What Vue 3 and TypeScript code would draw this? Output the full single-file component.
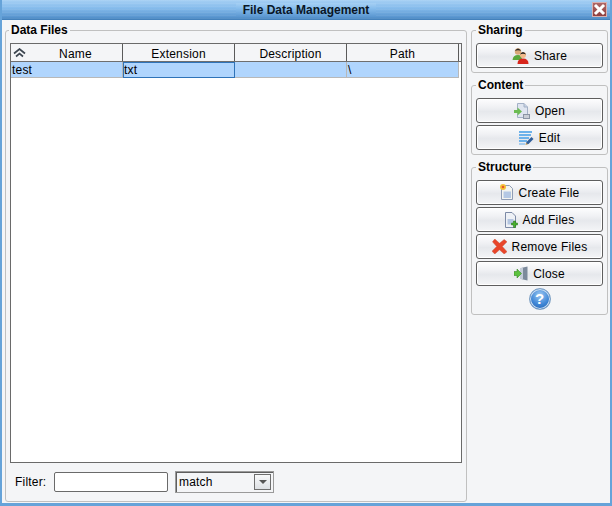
<script setup lang="ts">
const columns: string[] = ['Name', 'Extension', 'Description', 'Path']
</script>

<template>
  <div class="window">
    <header class="titlebar">
      <span class="title-text">File Data Management</span>
      <span class="close-x">
        <svg width="15" height="15" viewBox="0 0 15 15">
          <path d="M4 4 L11 11 M11 4 L4 11" stroke="#fff" stroke-width="3" stroke-linecap="square" />
        </svg>
      </span>
    </header>
    <main class="content">
      <fieldset class="group files">
        <legend>Data Files</legend>
        <div class="table">
          <div class="thead">
            <div v-for="(c, i) in columns" :key="c" class="th" :class="{ first: i === 0 }">
              <svg v-if="i === 0" class="sort" width="13" height="10" viewBox="0 0 13 10">
                <path d="M1 5.5 L6.5 1 L12 5.5 M3 8.5 L6.5 5.5 L10 8.5" fill="none" stroke="#3d4650" stroke-width="1.7" />
              </svg>
              {{ c }}
            </div>
            <div class="th-end"></div>
          </div>
          <div class="row">
            <div class="td">test</div>
            <div class="td focus">txt</div>
            <div class="td"></div>
            <div class="td">\</div>
          </div>
        </div>
        <div class="filter">
          <label class="filter-label">Filter:</label>
          <input class="filter-input" type="text" />
          <div class="combo">
            <span class="combo-text">match</span>
            <span class="combo-btn"><i class="arrow"></i></span>
          </div>
        </div>
      </fieldset>
      <aside class="side">
        <fieldset class="group">
          <legend>Sharing</legend>
          <button class="btn">
            <svg width="17" height="17" viewBox="0 0 17 17">
              <circle cx="6" cy="4.5" r="3.2" fill="#d9a878" />
              <path d="M2.8 4 Q6 -1 9.2 4 Q6 2.5 2.8 4 Z" fill="#2d2a26" />
              <path d="M0.5 13 Q1 8 6 8 Q10 8 10 13 Z" fill="#5aa83c" />
              <circle cx="11" cy="8" r="3" fill="#f2b98a" />
              <path d="M7.8 7.5 Q11 2.5 14.2 7.5 Q11 5.8 7.8 7.5 Z" fill="#222" />
              <path d="M5.5 17 Q5.5 11.5 11 11.5 Q16.5 11.5 16.5 17 Z" fill="#d8261c" />
            </svg>
            <span>Share</span>
          </button>
        </fieldset>
        <fieldset class="group">
          <legend>Content</legend>
          <div class="stack">
            <button class="btn">
              <svg width="16" height="16" viewBox="0 0 16 16">
                <path d="M3.5 0.5 H10 L13.5 4 V14.5 H3.5 Z" fill="#dfe5f0" stroke="#a3b0c6" />
                <path d="M10 0.5 V4 H13.5" fill="#c6d2e4" stroke="#a3b0c6" />
                <path d="M0 7 H3.5 V4.5 L8 8.5 L3.5 12.5 V10 H0 Z" fill="#6cbc52" />
                <rect x="9.5" y="11.5" width="6" height="4" fill="#c9ced6" stroke="#8a94a3" />
              </svg>
              <span>Open</span>
            </button>
            <button class="btn">
              <svg width="15" height="16" viewBox="0 0 15 16">
                <path d="M0 1 H13 V3 H0 Z M0 4 H12 V6 H0 Z M0 7 H10 V9 H0 Z M0 10 H8 V12 H0 Z" fill="#6db2ea" />
                <path d="M0 13 H6 V15 H0 Z" fill="#a8cdee" />
                <path d="M6.5 14.5 L7.5 12 L12.5 7 L14.5 9 L9.5 14 Z" fill="#2f5e9a" />
                <path d="M6.5 15 L7.5 13 L8.8 14.2 Z" fill="#e8b04a" />
              </svg>
              <span>Edit</span>
            </button>
          </div>
        </fieldset>
        <fieldset class="group">
          <legend>Structure</legend>
          <div class="stack">
            <button class="btn">
              <svg width="14" height="17" viewBox="0 0 14 17">
                <path d="M1.5 1.5 H9.5 L12.5 4.5 V15.5 H1.5 Z" fill="#f3f4f0" stroke="#8f9db5" />
                <rect x="3.5" y="7.5" width="7.5" height="6.5" fill="#b4c8e4" />
                <circle cx="3" cy="3" r="3" fill="#f4c23a" />
                <circle cx="3" cy="3" r="1.3" fill="#e8582a" />
              </svg>
              <span>Create File</span>
            </button>
            <button class="btn">
              <svg width="13" height="16" viewBox="0 0 13 16">
                <path d="M0.5 0.5 H7 L10.5 4 V15.5 H0.5 Z" fill="#eef1f6" stroke="#7c8aa6" />
                <rect x="2.5" y="7" width="6" height="5.5" fill="#b3c5e0" />
                <path d="M6.5 11 H8.5 V9 H10.5 V11 H12.5 V13 H10.5 V15.5 H8.5 V13 H6.5 Z" fill="#49b02e" stroke="#1f6d14" stroke-width="0.5" />
              </svg>
              <span>Add Files</span>
            </button>
            <button class="btn">
              <svg width="15" height="15" viewBox="0 0 16 16">
                <path d="M3 0 L8 4.5 L13 0.5 L16 3 L11 8 L16 13.5 L13 16 L8 11.5 L3 16 L0 13 L5 8 L0.5 3 Z" fill="#e8452a" stroke="#c8563c" stroke-width="0.5" />
              </svg>
              <span>Remove Files</span>
            </button>
            <button class="btn">
              <svg width="14" height="15" viewBox="0 0 14 15">
                <path d="M7 2 L13.5 0.5 V14.5 L7 13 Z" fill="#7c8a9c" />
                <rect x="6" y="2" width="3" height="11" fill="#c4ccd8" />
                <path d="M0 5.5 H3 V3 L7.5 7.5 L3 12 V9.5 H0 Z" fill="#5cc23e" stroke="#2a7a1a" stroke-width="0.5" />
              </svg>
              <span>Close</span>
            </button>
            <div class="help-wrap">
              <span class="help">?</span>
            </div>
          </div>
        </fieldset>
      </aside>
    </main>
  </div>
</template>

<style>
html, body { margin: 0; padding: 0; background: #f4f5f7; }
</style>

<style scoped>
.window {
  width: 612px;
  height: 506px;
  box-sizing: border-box;
  display: flex;
  flex-direction: column;
  background: #f4f5f7;
  border: solid #66a3d9;
  border-width: 0 2px 3px 2px;
  font-family: "Liberation Sans", Arial, sans-serif;
  font-size: 12px;
  letter-spacing: 0.2px;
  color: #000;
  overflow: hidden;
}
.titlebar {
  position: relative;
  height: 20px;
  margin: 0 -2px;
  flex: none;
  display: flex;
  align-items: center;
  justify-content: center;
  background:
    repeating-linear-gradient(180deg, rgba(255,255,255,.06) 0 1px, transparent 1px 3px),
    linear-gradient(180deg, #a6d0f4 0%, #86bcec 40%, #5a96d0 85%, #3f7db8 100%);
}
.title-text {
  font-weight: bold;
  font-size: 12px;
  letter-spacing: 0;
  color: #0a1626;
  padding: 0 7px;
  background: linear-gradient(180deg, #a6d0f4 0%, #86bcec 40%, #5a96d0 100%);
}
.close-x {
  position: absolute;
  right: 5px;
  top: 2px;
  width: 15px;
  height: 15px;
  background: linear-gradient(180deg, #b06a6a, #8e3c3c);
  box-shadow: inset 0 0 0 1px #d8b0b0;
  display: block;
}
.close-x svg { display: block; }
.content {
  flex: 1;
  min-height: 0;
  display: flex;
  gap: 4px;
  padding: 3px 2px 0 3px;
}
.group {
  margin: 0;
  min-width: 0;
  padding: 6px 4px 4px 4px;
  border: 1px solid #c0c0c0;
  border-radius: 3px;
}
.group legend {
  padding: 0 2px;
  margin-left: 0;
  font-weight: bold;
  font-size: 12px;
  letter-spacing: 0;
  line-height: 14px;
}
.files {
  width: 463px;
  box-sizing: border-box;
  height: 479px;
  display: flex;
  flex-direction: column;
}
.files legend { margin-left: -1px; }
.table {
  flex: none;
  height: 420px;
  box-sizing: border-box;
  background: #fff;
  border: 1px solid #6a6a6a;
}
.thead {
  display: flex;
  height: 18px;
  box-sizing: border-box;
  background: #f4f5f7;
  border-bottom: 1px solid #6e6e6e;
}
.th {
  position: relative;
  width: 112px;
  box-sizing: border-box;
  border-right: 1px solid #5a5a5a;
  text-align: center;
  line-height: 20px;
}
.th.first { padding-left: 18px; }
.th-end { width: 2px; }
.sort { position: absolute; left: 2px; top: 4px; }
.row {
  display: flex;
  width: 448px;
  height: 16px;
  background: #b0d5fd;
  border-bottom: 1px solid #b8b8b8;
  box-sizing: border-box;
}
.td {
  width: 112px;
  box-sizing: border-box;
  border-right: 1px solid #b8b8b8;
  line-height: 16px;
  padding-left: 1px;
  overflow: hidden;
}
.focus {
  border: 1px solid #2f73b8;
  height: 16px;
  line-height: 14px;
  padding-left: 0;
}
.filter {
  display: flex;
  align-items: center;
  height: 37px;
  flex: none;
}
.filter-label {
  width: 39px;
  margin-left: 5px;
}
.filter-input {
  width: 114px;
  height: 20px;
  box-sizing: border-box;
  border: 1px solid #6a6a6a;
  border-radius: 2px;
  background: #fff;
  padding: 0;
  outline: none;
}
.combo {
  margin-left: 7px;
  width: 99px;
  height: 22px;
  box-sizing: border-box;
  border: 1px solid #9a9a9a;
  box-shadow: inset 1px 1px 0 #5e5e5e;
  display: flex;
  align-items: center;
  justify-content: space-between;
  padding: 0 2px 0 3px;
  background: #f4f5f7;
}
.combo-btn {
  width: 17px;
  height: 16px;
  box-sizing: border-box;
  border: 1px solid #6e6e6e;
  background: linear-gradient(180deg, #f8f9fa, #dde0e4);
  display: flex;
  align-items: center;
  justify-content: center;
}
.arrow {
  display: block;
  width: 0;
  height: 0;
  border: solid transparent;
  border-width: 4px 4px 0 4px;
  border-top-color: #555;
}
.side {
  width: 137px;
  flex: none;
  display: flex;
  flex-direction: column;
  gap: 5px;
}
.stack {
  display: flex;
  flex-direction: column;
  gap: 2px;
}
.btn {
  width: 127px;
  height: 25px;
  box-sizing: border-box;
  padding: 0;
  border: 1px solid #5e5e5e;
  border-radius: 3px;
  background: linear-gradient(180deg, #fdfdfe 0%, #f0f1f4 35%, #e6e8ec 55%, #f4f5f7 100%);
  box-shadow: inset 0 0 0 1px #fff;
  display: flex;
  align-items: center;
  justify-content: center;
  gap: 5px;
  font: inherit;
  letter-spacing: 0.2px;
  color: #000;
}
.btn svg { flex: none; }
.help-wrap {
  display: flex;
  justify-content: center;
  height: 22px;
}
.help {
  width: 22px;
  height: 22px;
  border-radius: 50%;
  box-sizing: border-box;
  border: 1px solid #7da0c4;
  background: radial-gradient(circle at 50% 30%, #9cc8f2 0%, #3f86d6 55%, #1e5ca8 100%);
  box-shadow: inset 0 0 0 1px #cfe0f2;
  color: #fff;
  font-weight: bold;
  font-size: 15px;
  letter-spacing: 0;
  text-align: center;
  line-height: 20px;
}
</style>
